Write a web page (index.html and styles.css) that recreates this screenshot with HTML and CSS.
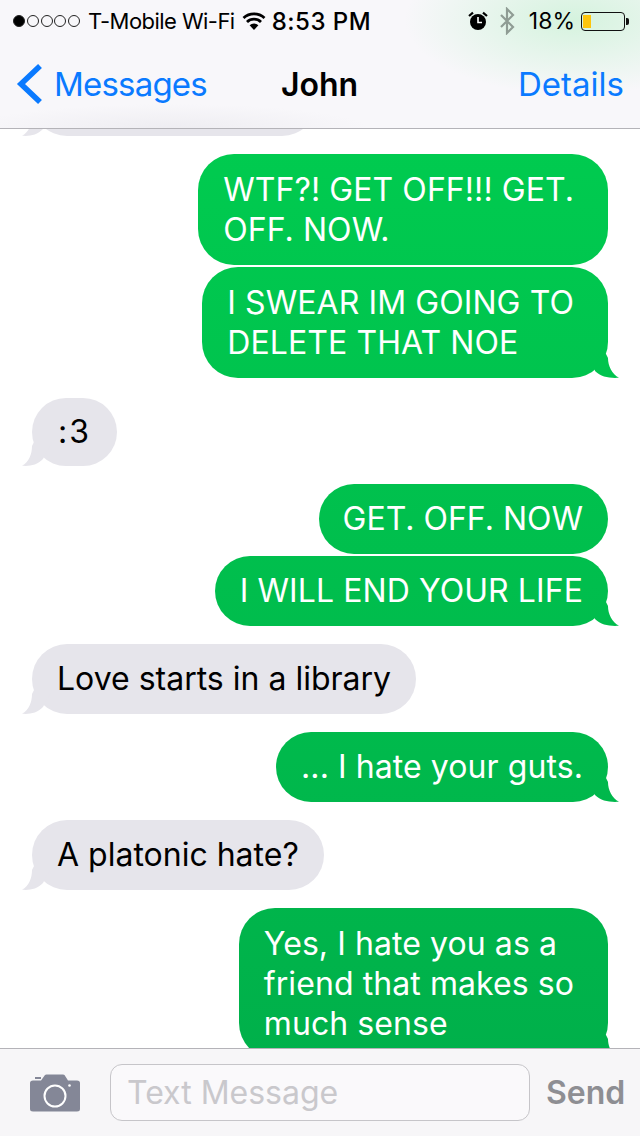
FILE: index.html
```html
<!DOCTYPE html>
<html lang="en">
<head>
    <meta charset="UTF-8">
    <meta name="viewport" content="width=device-width, initial-scale=1.0">
    <title>John</title>
    <link rel="stylesheet" href="styles.css">
</head>
<body>
<div class="phone">
    <header class="top">
        <div class="status">
            <div class="status-left">
                <span class="dots"><i class="dot on"></i><i class="dot"></i><i class="dot"></i><i class="dot"></i><i class="dot"></i></span>
                <span class="carrier">T-Mobile Wi-Fi</span>
                <svg class="wifi" width="26" height="20" viewBox="0 0 26 20">
                    <path d="M13 19 L8.600 14.200 A6.500 6.500 0 0 1 17.400 14.200 Z" fill="#000"/>
                    <path d="M6 11 A10 10 0 0 1 20 11" fill="none" stroke="#000" stroke-width="2.800"/>
                    <path d="M2.500 7 A15.500 15.500 0 0 1 23.500 7" fill="none" stroke="#000" stroke-width="2.800"/>
                </svg>
                <span class="clock">8:53 PM</span>
            </div>
            <div class="status-right">
                <svg class="alarm" width="20" height="20" viewBox="0 0 20 20">
                    <circle cx="10" cy="11" r="8" fill="#000"/>
                    <path d="M10 6 V11.500 H14" fill="none" stroke="#fff" stroke-width="1.600"/>
                    <path d="M1 5 L5 1.600 M19 5 L15 1.600" stroke="#000" stroke-width="2.200"/>
                </svg>
                <svg class="bt" width="16" height="28" viewBox="0 0 16 28">
                    <path d="M2 8 L14 20 L8 26 V2 L14 8 L2 20" fill="none" stroke="#8f9c94" stroke-width="2.200"/>
                </svg>
                <span class="percent">18%</span>
                <div class="battery"><div class="battery-fill"></div></div>
                <div class="battery-tip"></div>
            </div>
        </div>
        <nav class="nav">
            <a class="back">
                <svg width="28" height="42" viewBox="0 0 28 42">
                    <path d="M25 3 L6 21 L25 39" fill="none" stroke="#0a7aff" stroke-width="5.600"/>
                </svg>
                <span class="back-label">Messages</span>
            </a>
            <div class="title">John</div>
            <a class="details">Details</a>
        </nav>
    </header>

    <main class="thread">
        <div class="bubble in cut"></div>
        <div class="bubble out multi no-tail">WTF?! GET OFF!!! GET.<br>OFF. NOW.</div>
        <div class="bubble out multi close">I SWEAR IM GOING TO<br>DELETE THAT NOE</div>
        <div class="bubble in emote">:3</div>
        <div class="bubble out no-tail after-emote">GET. OFF. NOW</div>
        <div class="bubble out close">I WILL END YOUR LIFE</div>
        <div class="bubble in">Love starts in a library</div>
        <div class="bubble out">... I hate your guts.</div>
        <div class="bubble in">A platonic hate?</div>
        <div class="bubble out multi">Yes, I hate you as a<br>friend that makes so<br>much sense</div>
    </main>

    <footer class="bottom">
        <svg class="camera" width="50" height="38" viewBox="0 0 50 38">
            <path d="M3 6.500 H11 L15 1 Q15.500 0.500 16.500 0.500 H33 Q34 0.500 34.500 1 L38 6.500 H47 Q50 6.500 50 9 V35 Q50 37.500 47 37.500 H3 Q0 37.500 0 35 V9 Q0 6.500 3 6.500 Z" fill="#848797"/>
            <rect x="5" y="3" width="6" height="2" fill="#848797"/>
            <circle cx="25" cy="22" r="10.500" fill="none" stroke="#fff" stroke-width="2"/>
            <circle cx="39.500" cy="11.500" r="1.300" fill="#fff"/>
        </svg>
        <div class="input">Text Message</div>
        <div class="send">Send</div>
    </footer>
</div>
</body>
</html>
```

FILE: styles.css
```css
* {
    box-sizing: border-box;
}
html, body {
    margin: 0;
    padding: 0;
}
body {
    font-family: Inter, "Liberation Sans", sans-serif;
    background: #fff;
    color: #000;
}
.phone {
    width: 640px;
    height: 1136px;
    display: flex;
    flex-direction: column;
    overflow: hidden;
}

/* top bars */
.top {
    height: 129px;
    flex: none;
    border-bottom: 1px solid #b4b3b8;
    background:
        radial-gradient(ellipse 170px 75px at 575px 20px, #d5f3de 0%, rgba(213, 243, 222, 0) 100%),
        radial-gradient(ellipse 200px 25px at 170px 129px, rgba(228, 227, 233, 0.5) 0%, rgba(228, 227, 233, 0) 100%),
        #f8f7fa;
    position: relative;
    z-index: 2;
}
.status {
    height: 42px;
    padding: 0 11px 0 13px;
    display: flex;
    justify-content: space-between;
    align-items: center;
    font-size: 23px;
}
.status-left, .status-right {
    display: flex;
    align-items: center;
}
.dots {
    display: flex;
    gap: 1.750px;
    margin-right: 8px;
}
.dot {
    width: 12px;
    height: 12px;
    border: 1px solid #222;
    border-radius: 50%;
}
.dot.on {
    background: #000;
}
.carrier {
    font-size: 22px;
    letter-spacing: -0.550px;
    margin-right: 6px;
}
.clock {
    font-size: 24px;
    font-weight: 500;
    letter-spacing: 0.500px;
    margin-left: 5px;
}
.alarm {
    margin-right: 11px;
}
.bt {
    margin-right: 14px;
}
.percent {
    margin-right: 6px;
}
.battery {
    width: 44px;
    height: 19px;
    border: 1px solid #111;
    border-radius: 4px;
    padding: 2px 1px;
}
.battery-fill {
    width: 8px;
    height: 100%;
    background: #fdc50c;
}
.battery-tip {
    width: 3px;
    height: 7px;
    background: #111;
    border-radius: 0 2px 2px 0;
    margin-left: 1px;
}
.nav {
    height: 86px;
    padding: 0 16px 2px 15px;
    display: grid;
    grid-template-columns: 1fr auto 1fr;
    align-items: center;
    font-size: 33px;
    color: #0a7aff;
}
.back {
    display: flex;
    align-items: center;
    gap: 11px;
}
.back-label {
    letter-spacing: -0.800px;
}
.title {
    color: #000;
    font-size: 32px;
    font-weight: 600;
}
.details {
    text-align: right;
}

/* messages */
.thread {
    flex: 1;
    min-height: 0;
    overflow: hidden;
    padding: 0 32px;
    display: flex;
    flex-direction: column;
    align-items: flex-start;
}
.bubble {
    position: relative;
    padding: 15px 25px;
    border-radius: 36px;
    font-size: 32px;
    line-height: 40px;
    flex: none;
    margin-top: 18px;
}
.bubble.close {
    margin-top: 2px;
}
.bubble.multi {
    padding-top: 16px;
    padding-right: 34px;
}
.bubble::after {
    content: "";
    position: absolute;
    bottom: 0;
    width: 30px;
    height: 24px;
}
.bubble.no-tail::after {
    display: none;
}
.in {
    background: #e6e5eb;
}
.in::after {
    left: -10px;
    background: #e6e5eb;
    clip-path: path("M12 0 L10 4 C10 12 7 20 0 23.800 C8 24.500 15 23 21 17 L30 0 Z");
}
.out {
    align-self: flex-end;
    color: #fff;
    letter-spacing: 0.080px;
    background: linear-gradient(#00cf50, #00ae4a) fixed;
}
.out::after {
    right: -12px;
    background: linear-gradient(#00cf50, #00ae4a) fixed;
    clip-path: path("M16 0 L18 4 C18 12 22 20 29 23.800 C20 24.500 11 23 5 17 L0 0 Z");
}
.cut {
    width: 285px;
    height: 70px;
    margin-top: -63px;
}
.bubble.emote {
    margin-top: 20px;
    letter-spacing: 2px;
    padding: 14px 26px 14px 26px;
}
.bubble.after-emote {
    margin-top: 18px;
    letter-spacing: 0;
    padding-left: 24px;
}

/* input bar */
.bottom {
    height: 88px;
    flex: none;
    border-top: 1px solid #b4b3b8;
    background: #f7f6f8;
    padding-left: 30px;
    display: flex;
    align-items: center;
    position: relative;
    z-index: 2;
}
.camera {
    flex: none;
    margin-right: 30px;
}
.input {
    flex: none;
    width: 420px;
    height: 57px;
    border: 1px solid #c6c5c9;
    border-radius: 12px;
    background: #faf9fb;
    color: #c9c8cc;
    font-size: 32px;
    padding-left: 16px;
    display: flex;
    align-items: center;
}
.send {
    flex: none;
    margin-left: 16px;
    font-size: 32px;
    font-weight: 600;
    color: #8e8e93;
}
```
